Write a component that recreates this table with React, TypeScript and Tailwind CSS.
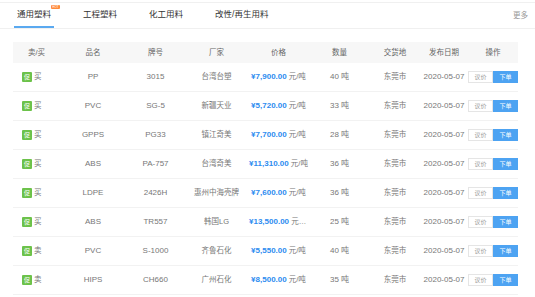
import React from "react";

type Row = {
  side: string;
  name: string;
  grade: string;
  maker: string;
  price: string;
  qty: string;
};

const rows: Row[] = [
  { side: "买", name: "PP", grade: "3015", maker: "台湾台塑", price: "¥7,900.00", qty: "40 吨" },
  { side: "买", name: "PVC", grade: "SG-5", maker: "新疆天业", price: "¥5,720.00", qty: "33 吨" },
  { side: "买", name: "GPPS", grade: "PG33", maker: "镇江奇美", price: "¥7,700.00", qty: "28 吨" },
  { side: "买", name: "ABS", grade: "PA-757", maker: "台湾奇美", price: "¥11,310.00", qty: "36 吨" },
  { side: "买", name: "LDPE", grade: "2426H", maker: "惠州中海壳牌", price: "¥7,600.00", qty: "36 吨" },
  { side: "买", name: "ABS", grade: "TR557", maker: "韩国LG", price: "¥13,500.00", qty: "25 吨" },
  { side: "卖", name: "PVC", grade: "S-1000", maker: "齐鲁石化", price: "¥5,550.00", qty: "40 吨" },
  { side: "卖", name: "HIPS", grade: "CH660", maker: "广州石化", price: "¥8,500.00", qty: "35 吨" },
];

const tabs = ["通用塑料", "工程塑料", "化工用料", "改性/再生用料"];

// column widths, shared by header and body
const cols = [
  "w-[47px]",
  "w-[66px]",
  "w-[59px]",
  "w-[63px]",
  "w-[61px]",
  "w-[61px]",
  "w-[50px]",
  "w-[48px]",
  "w-[50px]",
];

const headers = ["卖/买", "品名", "牌号", "厂家", "价格", "数量", "交货地", "发布日期", "操作"];

export default function App() {
  return (
    <div
      className="w-[535px] h-[297px] overflow-hidden bg-white text-[#666]"
      style={{ fontFamily: '"Liberation Sans", "Noto Sans CJK SC", sans-serif' }}
    >
      {/* 标签栏 */}
      <div className="mt-[2px] border-t border-[#f0f0f0] border-b h-[27px] flex items-stretch justify-between">
        <div className="flex pl-[14px] gap-[26px]">
          {tabs.map((t, i) => (
            <div
              key={t}
              className={`relative flex items-center px-[3px] text-[8.5px] ${
                i === 0 ? "text-[#333] border-b-[2px] border-[#5aa9f0]" : "text-[#333] border-b-[2px] border-transparent"
              }`}
            >
              {t}
              {i === 0 && (
                <span className="absolute left-[37px] top-[2px] h-[4px] w-[9px] rounded-[1px] bg-[#ff8a3a] text-[3px] leading-[4px] text-white text-center">
                  HOT
                </span>
              )}
            </div>
          ))}
        </div>
        <div className="flex items-center pr-[7px] text-[7.5px] text-[#999]">更多</div>
      </div>

      {/* 表格 */}
      <div className="mt-[13px] ml-[13px] w-[505px]">
        <div className="flex h-[21px] items-center bg-[#f7f7f7] text-[7.5px] text-[#666]">
          {headers.map((h, i) => (
            <div key={h} className={`${cols[i]} text-center`}>
              {h}
            </div>
          ))}
        </div>

        {rows.map((r, idx) => (
          <div key={idx} className="flex h-[29px] items-center border-b border-[#f2f2f2] text-[8px] text-[#777]">
            <div className={`${cols[0]} flex items-center gap-[2px] pl-[9px]`}>
              <span className="flex h-[10px] w-[10px] items-center justify-center rounded-[1px] bg-[#6cc24a] text-[6px] text-white">
                促
              </span>
              <span className="text-[7.5px]">{r.side}</span>
            </div>
            <div className={`${cols[1]} text-center`}>{r.name}</div>
            <div className={`${cols[2]} text-center`}>{r.grade}</div>
            <div className={`${cols[3]} text-center text-[7.5px] truncate`}>{r.maker}</div>
            <div className={`${cols[4]} truncate px-[1px] text-center text-[7.5px]`}>
              <span className="font-bold text-[#2d8cf0] text-[8px]">{r.price}</span> 元/吨
            </div>
            <div className={`${cols[5]} text-center`}>{r.qty}</div>
            <div className={`${cols[6]} text-center text-[7.5px]`}>东莞市</div>
            <div className={`${cols[7]} text-center`}>2020-05-07</div>
            <div className={`${cols[8]} flex justify-end`}>
              <button className="h-[12px] w-[25px] border border-[#e5e5e5] bg-white text-[6px] text-[#999] leading-none">
                议价
              </button>
              <button className="h-[12px] w-[25px] bg-[#4da3f2] text-[6px] text-white leading-none">下单</button>
            </div>
          </div>
        ))}
      </div>
    </div>
  );
}
